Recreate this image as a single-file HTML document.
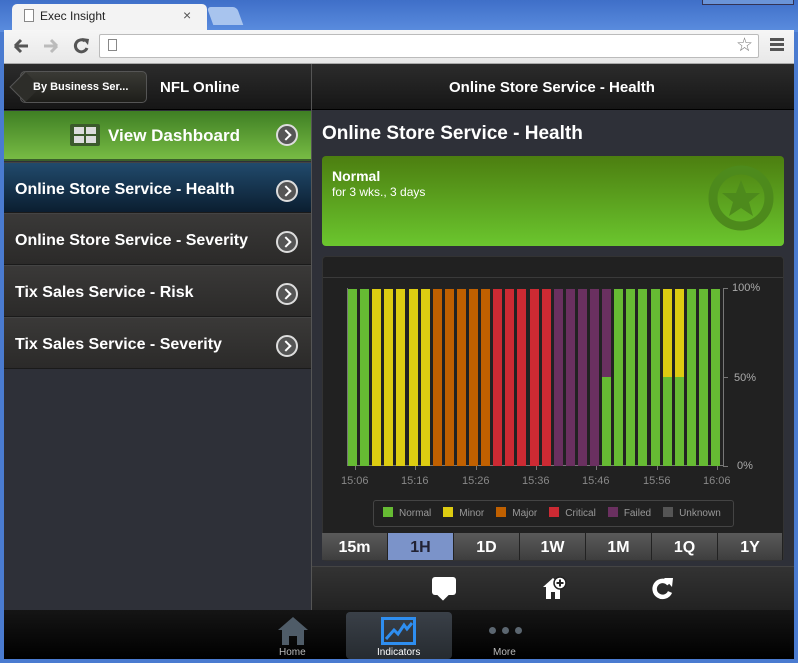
<!DOCTYPE html>
<html><head><meta charset="utf-8"><style>
*{box-sizing:border-box;margin:0;padding:0}
body{width:798px;height:663px;overflow:hidden;background:#4a7bd0;font-family:"Liberation Sans",Arial,sans-serif;position:relative}
.a{position:absolute}
.b{font-weight:bold;color:#fff}
.chev{position:absolute;width:22px;height:22px;border-radius:50%;background:#555;border:2px solid #ddd}
.chev:after{content:"";position:absolute;left:4px;top:5px;width:6px;height:6px;border-right:2.5px solid #fff;border-top:2.5px solid #fff;transform:rotate(45deg)}
.item{position:absolute;left:4px;width:307px;height:52px;background:linear-gradient(#3a3938,#2b2a29);border-bottom:1px solid #1a1a1a;border-top:1px solid #444}
.item span{position:absolute;left:11px;top:18px;font-size:16px;font-weight:bold;color:#fff}
.item .chev{left:272px;top:17px}
.btn{position:absolute;top:533px;height:27px;width:66px;background:linear-gradient(#5a5a5a,#3e3e3e);border-right:1px solid #222;color:#fff;font-weight:bold;font-size:16px;text-align:center;line-height:29px}
.lg{display:inline-block;width:10px;height:10px;margin:0 6px 0 12px;vertical-align:-1px}
</style></head><body>
<!-- browser chrome -->
<div class="a" style="left:0;top:0;width:798px;height:32px;background:linear-gradient(#3f6fc8,#5b8ddf)"></div>
<div class="a" style="left:12px;top:4px;width:195px;height:28px;background:#f3f3f3;border-radius:5px 5px 0 0"></div>
<div class="a" style="left:24px;top:9px;width:10px;height:13px;border:1px solid #888;background:#fff"></div>
<div class="a" style="left:40px;top:9px;font-size:12px;color:#222">Exec Insight</div>
<div class="a" style="left:183px;top:7px;font-size:14px;color:#555">×</div>
<div class="a" style="left:210px;top:7px;width:30px;height:18px;background:#a8c4ee;border-radius:4px 4px 0 0;transform:skewX(20deg)"></div>
<div class="a" style="left:702px;top:0;width:92px;height:5px;border:1px solid #335;border-top:none;background:#6a94d8"></div>
<div class="a" style="left:4px;top:30px;width:790px;height:34px;background:linear-gradient(#f6f6f6,#e8e8e8);border-bottom:1px solid #aaa"></div>
<svg class="a" style="left:12px;top:37px" width="80" height="18"><path d="M3 9H16M3 9L9 3M3 9L9 15" stroke="#555" stroke-width="3" fill="none"/><path d="M32 9H45M45 9L39 3M45 9L39 15" stroke="#bbb" stroke-width="3" fill="none"/><path d="M73 4A6 6 0 1 0 75 11" stroke="#555" stroke-width="3" fill="none"/><path d="M70 1L77 2L76 8Z" fill="#555"/></svg>
<div class="a" style="left:99px;top:34px;width:660px;height:24px;background:#fff;border:1px solid #bbb;border-radius:2px"></div>
<div class="a" style="left:108px;top:39px;width:9px;height:12px;border:1px solid #888"></div>
<div class="a" style="left:736px;top:34px;font-size:19px;color:#777">☆</div>
<div class="a" style="left:770px;top:38px;width:14px;height:3px;background:#555;box-shadow:0 5px #555,0 10px #555"></div>
<!-- content -->
<div class="a" style="left:4px;top:64px;width:790px;height:595px;background:#2e3038"></div>
<div class="a" style="left:4px;top:64px;width:790px;height:46px;background:linear-gradient(#2c2c2c,#161616);border-bottom:1px solid #000"></div>
<div class="a" style="left:311px;top:64px;width:1px;height:546px;background:#555"></div>
<div class="a" style="left:20px;top:71px;width:127px;height:32px;background:linear-gradient(#3a3a35,#1e1e1a);border:1px solid #555;border-radius:5px"></div>
<div class="a" style="left:14px;top:76px;width:22px;height:22px;background:#2d2d29;border-left:1px solid #555;border-bottom:1px solid #555;transform:rotate(45deg)"></div>
<div class="a b" style="left:33px;top:81px;font-size:11px">By Business Ser...</div>
<div class="a b" style="left:160px;top:79px;font-size:15px">NFL Online</div>
<div class="a b" style="left:449px;top:79px;font-size:15px">Online Store Service - Health</div>
<!-- left menu -->
<div class="a" style="left:4px;top:111px;width:307px;height:50px;background:linear-gradient(#3f7f24,#77bb44);border-bottom:2px solid #3a5f2a"></div>
<div class="a" style="left:70px;top:124px;width:30px;height:22px;background:#3c5a2c;border-radius:2px"></div>
<div class="a" style="left:74px;top:127px;width:10px;height:7px;background:#ddd;box-shadow:12px 0 #ddd,0 9px #ddd,12px 9px #ddd"></div>
<div class="a b" style="left:108px;top:126px;font-size:17px">View Dashboard</div>
<div class="chev" style="left:276px;top:124px"></div>
<div class="item" style="top:162px;height:51px;background:linear-gradient(#214a6c,#0b1e30)"><span>Online Store Service - Health</span><div class="chev"></div></div>
<div class="item" style="top:213px"><span>Online Store Service - Severity</span><div class="chev"></div></div>
<div class="item" style="top:265px"><span>Tix Sales Service - Risk</span><div class="chev"></div></div>
<div class="item" style="top:317px"><span>Tix Sales Service - Severity</span><div class="chev"></div></div>
<!-- right -->
<div class="a b" style="left:322px;top:123px;font-size:19px">Online Store Service - Health</div>
<div class="a" style="left:322px;top:156px;width:462px;height:90px;border-radius:4px;background:linear-gradient(#4c7e10,#6bc62e)"></div>
<div class="a b" style="left:332px;top:168px;font-size:14px">Normal</div>
<div class="a" style="left:332px;top:185px;font-size:12px;color:#fff">for 3 wks., 3 days</div>
<svg class="a" style="left:708px;top:165px" width="66" height="66"><circle cx="33" cy="33" r="28" fill="none" stroke="#4d8a1c" stroke-width="9"/><path d="M33 15L38 28L52 28L41 37L45 51L33 43L21 51L25 37L14 28L28 28Z" fill="#4d8a1c"/></svg>
<div class="a" style="left:322px;top:256px;width:462px;height:305px;background:#212121;border:1px solid #333;border-radius:4px"></div>
<div class="a" style="left:323px;top:277px;width:460px;height:1px;background:#3a3a3a"></div>
<div class="a" id="plot" style="left:347px;top:288px;width:376px;height:178px;border:1px solid #777;border-top:none;border-right:none;background:#222"></div>
<div class="a" style="left:723px;top:288px;width:1px;height:178px;background:#777"></div>
<div class="a" style="left:723px;top:288px;width:5px;height:1px;background:#777"></div>
<div class="a" style="left:723px;top:377px;width:5px;height:1px;background:#777"></div>
<div class="a" style="left:723px;top:466px;width:5px;height:1px;background:#777"></div>
<div class="a" style="left:732px;top:282px;font-size:11px;color:#aaa">100%</div>
<div class="a" style="left:734px;top:372px;font-size:11px;color:#aaa">50%</div>
<div class="a" style="left:737px;top:460px;font-size:11px;color:#aaa">0%</div>
<div id="xl"></div>
<div class="a" style="left:373px;top:500px;width:361px;height:27px;border:1px solid #444;border-radius:3px;font-size:10px;color:#999;line-height:26px;white-space:nowrap;padding-left:-2px">
<span class="lg" style="background:#66bb33;margin-left:9px"></span>Normal<span class="lg" style="background:#ddcc11"></span>Minor<span class="lg" style="background:#c06000"></span>Major<span class="lg" style="background:#cc2a33"></span>Critical<span class="lg" style="background:#6a3060"></span>Failed<span class="lg" style="background:#555"></span>Unknown</div>
<div class="btn" style="left:322px">15m</div>
<div class="btn" style="left:388px;background:#7b93c9;color:#223">1H</div>
<div class="btn" style="left:454px">1D</div>
<div class="btn" style="left:520px">1W</div>
<div class="btn" style="left:586px">1M</div>
<div class="btn" style="left:652px">1Q</div>
<div class="btn" style="left:718px;width:65px">1Y</div>
<!-- action bar -->
<div class="a" style="left:312px;top:566px;width:482px;height:44px;background:linear-gradient(#333,#222);border-top:1px solid #444"></div>
<div class="a" style="left:432px;top:577px;width:24px;height:18px;background:#fff;border-radius:3px"></div>
<div class="a" style="left:439px;top:591px;width:8px;height:8px;background:#fff;transform:rotate(45deg)"></div>
<svg class="a" style="left:541px;top:575px" width="28" height="26"><path d="M2 12 L12 3 L22 12 L19 12 L19 24 L14 24 L14 17 L10 17 L10 24 L5 24 L5 12Z" fill="#fff"/><circle cx="19" cy="8" r="6" fill="#fff" stroke="#222" stroke-width="1.5"/><path d="M19 4.5V11.5M15.5 8H22.5" stroke="#222" stroke-width="2"/></svg>
<svg class="a" style="left:650px;top:575px" width="26" height="26"><path d="M19 9 A8 8 0 1 0 20 17" fill="none" stroke="#fff" stroke-width="4.5"/><path d="M14 3 L23 3 L22 12Z" fill="#fff"/></svg>
<!-- tab bar -->
<div class="a" style="left:4px;top:610px;width:790px;height:49px;background:linear-gradient(#151515,#000)"></div>
<div class="a" style="left:346px;top:612px;width:106px;height:47px;background:linear-gradient(#3a4048,#262b30);border-radius:4px"></div>
<svg class="a" style="left:277px;top:616px" width="32" height="30"><path d="M1 14 L16 1 L31 14 L27 14 L27 29 L20 29 L20 20 L12 20 L12 29 L5 29 L5 14Z" fill="#4f5c68"/></svg>
<div class="a" style="left:279px;top:647px;font-size:10px;color:#bbb">Home</div>
<svg class="a" style="left:381px;top:617px" width="35" height="28"><rect x="1.5" y="1.5" width="32" height="25" fill="none" stroke="#2e8ef0" stroke-width="3"/><path d="M5 22 L13 13 L17 17 L23 8 L26 12 L31 6" fill="none" stroke="#2e8ef0" stroke-width="3"/></svg>
<div class="a" style="left:377px;top:647px;font-size:10px;color:#fff">Indicators</div>
<div class="a" style="left:489px;top:627px;width:7px;height:7px;border-radius:50%;background:#5b6670;box-shadow:13px 0 #5b6670,26px 0 #5b6670"></div>
<div class="a" style="left:493px;top:647px;font-size:10px;color:#bbb">More</div>
<script>
var G='#66bb33',Y='#ddcc11',O='#c06000',R='#cc2a33',P='#6a3060';
var bars=[[G],[G],[Y],[Y],[Y],[Y],[Y],[O],[O],[O],[O],[O],[R],[R],[R],[R],[R],[P],[P],[P],[P],[P,G],[G],[G],[G],[G],[Y,G],[Y,G],[G],[G],[G]];
var h='';
bars.forEach(function(b,i){var x=348+i*12.1;
 if(b.length==1)h+='<div class="a" style="left:'+x.toFixed(1)+'px;top:289px;width:9px;height:177px;background:'+b[0]+'"></div>';
 else h+='<div class="a" style="left:'+x.toFixed(1)+'px;top:289px;width:9px;height:88px;background:'+b[0]+'"></div><div class="a" style="left:'+x.toFixed(1)+'px;top:377px;width:9px;height:89px;background:'+b[1]+'"></div>';
});
var t=['15:06','15:16','15:26','15:36','15:46','15:56','16:06'],xs=[355,415,476,536,596,657,717];
t.forEach(function(s,i){h+='<div class="a" style="left:'+xs[i]+'px;top:466px;width:1px;height:4px;background:#777"></div><div class="a" style="left:'+(xs[i]-14)+'px;top:475px;font-size:11px;color:#888">'+s+'</div>';});
document.getElementById('xl').innerHTML=h;
</script>
</body></html>
